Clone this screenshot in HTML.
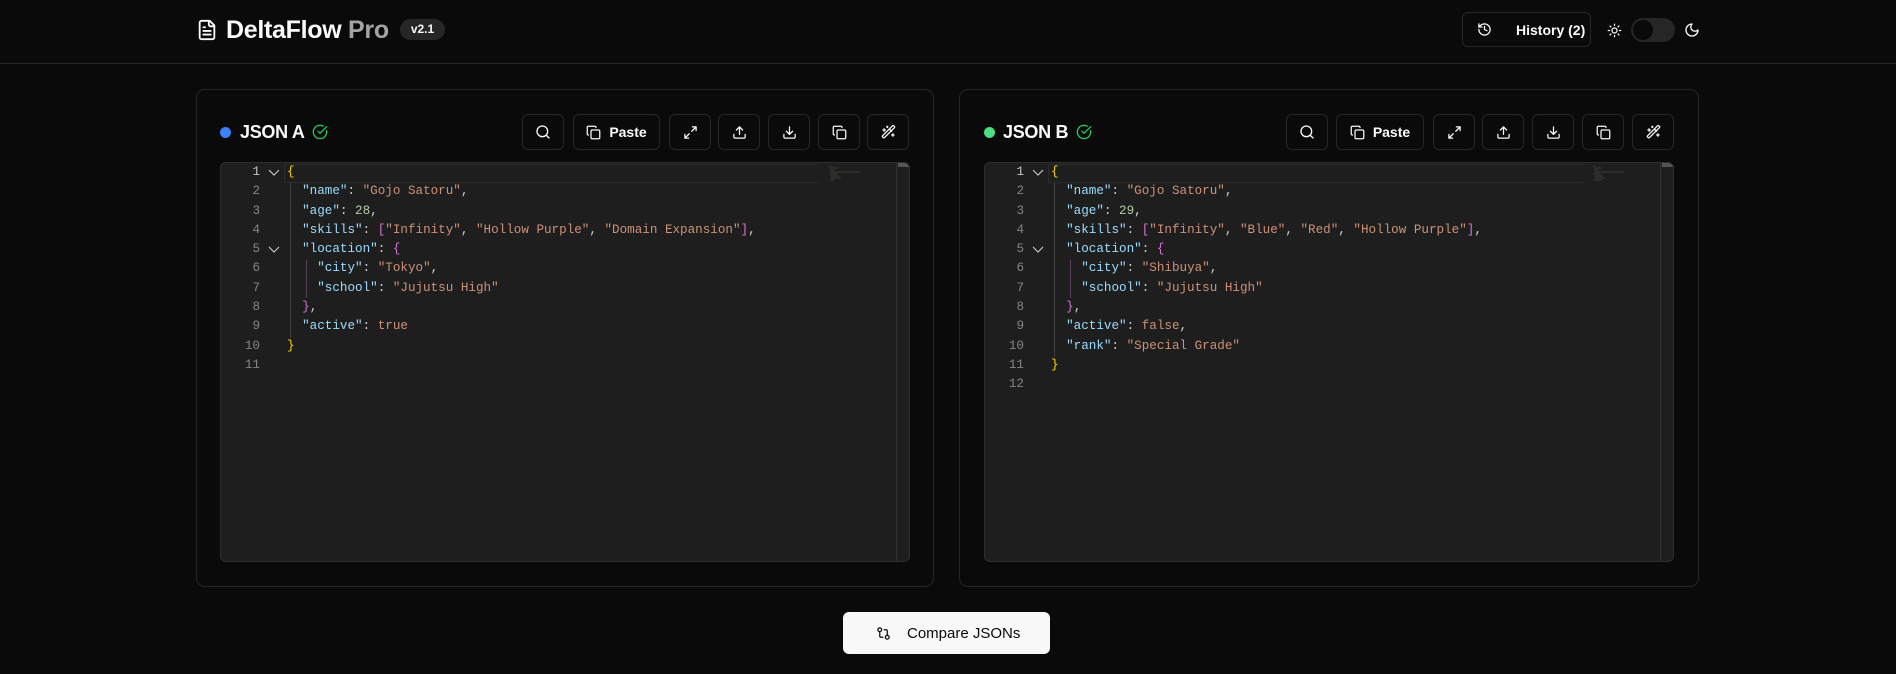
<!DOCTYPE html>
<html><head><meta charset="utf-8"><style>
*{box-sizing:border-box;margin:0;padding:0}
body{width:1896px;height:674px;background:#0a0a0a;font-family:"Liberation Sans",sans-serif;color:#fafafa;position:relative;overflow:hidden}
.hdr{position:absolute;left:0;top:0;width:1896px;height:64px;border-bottom:1px solid #262626}
.abs{position:absolute}
.btn{position:absolute;top:114px;height:36px;border:1px solid #262626;border-radius:6px;background:#0a0a0a;display:flex;align-items:center;justify-content:center;gap:8px;font-weight:bold;font-size:14px}
svg{display:block}
.panel{position:absolute;top:89px;height:498px;border:1px solid #262626;border-radius:9px}
.ed{position:absolute;top:162px;height:400px;background:#1e1e1e;border:1px solid #2e2e2e;border-radius:6px;overflow:hidden;font-family:"Liberation Mono",monospace;font-size:12.6px}
.ln{position:absolute;left:0;width:39px;text-align:right;color:#858585}
.ln div,.code div{height:19.3px;line-height:19.3px;white-space:pre}
.code{position:absolute;left:66px;top:0}
.k{color:#9cdcfe}.s{color:#ce9178}.n{color:#b5cea8}.y{color:#ffd700}.p{color:#da70d6}.w{color:#d4d4d4}
.cur{position:absolute;left:63px;right:0;top:1px;height:19px;border:1px solid #2c2c2c;border-right:none}
.mm{position:absolute;top:2px;width:62px;height:16px;opacity:.6}
.sb{position:absolute;right:0;top:0;width:13px;height:100%;border-left:1px solid #333}
.sb:before{content:"";position:absolute;left:1px;right:0;top:0;height:4px;background:#555}
.guide{position:absolute;width:1px;background:#404040}
</style></head><body>
<div class="hdr"></div>
<svg class="abs" style="left:196px;top:18px" width="22" height="24" viewBox="0 0 24 24" fill="none" stroke="#fafafa" stroke-width="2" stroke-linecap="round" stroke-linejoin="round"><path d="M15 2H6a2 2 0 0 0-2 2v16a2 2 0 0 0 2 2h12a2 2 0 0 0 2-2V7z"/><path d="M14 2v4a2 2 0 0 0 2 2h4M16 13H8M16 17H8M10 9H8"/></svg>
<div class="abs" style="left:226px;top:15px;font-size:25px;font-weight:bold;letter-spacing:-0.3px;line-height:30px">DeltaFlow <span style="color:#a3a3a3">Pro</span></div>
<div class="abs" style="left:400px;top:19px;width:45px;height:21px;border-radius:11px;background:#262626;font-size:12px;font-weight:bold;text-align:center;line-height:21px">v2.1</div>
<div class="abs" style="left:1462px;top:12px;width:129px;height:35px;border:1px solid #262626;border-radius:6px;font-size:14px;font-weight:bold;display:flex;align-items:center;white-space:nowrap"><svg style="margin-left:14px" width="15" height="15" viewBox="0 0 24 24" fill="none" stroke="#fafafa" stroke-width="2" stroke-linecap="round" stroke-linejoin="round"><path d="M3 12a9 9 0 1 0 9-9 9.75 9.75 0 0 0-6.74 2.74L3 8"/><path d="M3 3v5h5M12 7v5l4 2"/></svg><span style="margin-left:24px">History (2)</span></div>
<svg class="abs" style="left:1607px;top:23px" width="15" height="15" viewBox="0 0 24 24" fill="none" stroke="#fafafa" stroke-width="2" stroke-linecap="round"><circle cx="12" cy="12" r="4"/><path d="M12 2v2M12 20v2M4.9 4.9l1.4 1.4M17.7 17.7l1.4 1.4M2 12h2M20 12h2M6.3 17.7l-1.4 1.4M19.1 4.9l-1.4 1.4"/></svg>
<div class="abs" style="left:1631px;top:18px;width:44px;height:24px;border-radius:12px;background:#262626"><div style="position:absolute;left:2px;top:2px;width:20px;height:20px;border-radius:50%;background:#0a0a0a"></div></div>
<svg class="abs" style="left:1684px;top:22px" width="16" height="16" viewBox="0 0 24 24" fill="none" stroke="#fafafa" stroke-width="2" stroke-linecap="round" stroke-linejoin="round"><path d="M12 3a6 6 0 0 0 9 9 9 9 0 1 1-9-9Z"/></svg>

<div class="panel" style="left:196px;width:738px"></div>
<div class="abs" style="left:220px;top:127px;width:11px;height:11px;border-radius:50%;background:#3b82f6"></div>
<div class="abs" style="left:240px;top:120px;font-size:18px;font-weight:bold;line-height:24px;letter-spacing:-0.3px">JSON A</div>
<svg class="abs" style="left:312px;top:124px" width="16" height="16" viewBox="0 0 24 24" fill="none" stroke="#22c55e" stroke-width="2" stroke-linecap="round" stroke-linejoin="round"><path d="M21.8 10A10 10 0 1 1 17 3.3"/><path d="m9 11 3 3L22 4"/></svg>

<div class="panel" style="left:959px;width:740px"></div>
<div class="abs" style="left:984px;top:127px;width:11px;height:11px;border-radius:50%;background:#4ade80"></div>
<div class="abs" style="left:1003px;top:120px;font-size:18px;font-weight:bold;line-height:24px;letter-spacing:-0.3px">JSON B</div>
<svg class="abs" style="left:1076px;top:124px" width="16" height="16" viewBox="0 0 24 24" fill="none" stroke="#22c55e" stroke-width="2" stroke-linecap="round" stroke-linejoin="round"><path d="M21.8 10A10 10 0 1 1 17 3.3"/><path d="m9 11 3 3L22 4"/></svg>

<div class="btn" style="left:522px;width:42px"><svg width="16" height="16" viewBox="0 0 24 24" fill="none" stroke="#fafafa" stroke-width="2" stroke-linecap="round"><circle cx="11" cy="11" r="8"/><path d="m21 21-4.3-4.3"/></svg></div>
<div class="btn" style="left:573px;width:87px"><svg width="15" height="15" viewBox="0 0 24 24" fill="none" stroke="#fafafa" stroke-width="2" stroke-linecap="round" stroke-linejoin="round"><rect x="8" y="8" width="14" height="14" rx="2"/><path d="M4 16c-1.1 0-2-.9-2-2V4c0-1.1.9-2 2-2h10c1.1 0 2 .9 2 2"/></svg>Paste</div>
<div class="btn" style="left:669px;width:42px"><svg width="15" height="15" viewBox="0 0 24 24" fill="none" stroke="#fafafa" stroke-width="2" stroke-linecap="round" stroke-linejoin="round"><path d="M15 3h6v6M9 21H3v-6M21 3l-7 7M3 21l7-7"/></svg></div>
<div class="btn" style="left:718px;width:42px"><svg width="15" height="15" viewBox="0 0 24 24" fill="none" stroke="#fafafa" stroke-width="2" stroke-linecap="round" stroke-linejoin="round"><path d="M21 15v4a2 2 0 0 1-2 2H5a2 2 0 0 1-2-2v-4M17 8l-5-5-5 5M12 3v12"/></svg></div>
<div class="btn" style="left:768px;width:42px"><svg width="15" height="15" viewBox="0 0 24 24" fill="none" stroke="#fafafa" stroke-width="2" stroke-linecap="round" stroke-linejoin="round"><path d="M21 15v4a2 2 0 0 1-2 2H5a2 2 0 0 1-2-2v-4M7 10l5 5 5-5M12 15V3"/></svg></div>
<div class="btn" style="left:818px;width:42px"><svg width="15" height="15" viewBox="0 0 24 24" fill="none" stroke="#fafafa" stroke-width="2" stroke-linecap="round" stroke-linejoin="round"><rect x="8" y="8" width="14" height="14" rx="2"/><path d="M4 16c-1.1 0-2-.9-2-2V4c0-1.1.9-2 2-2h10c1.1 0 2 .9 2 2"/></svg></div>
<div class="btn" style="left:867px;width:42px"><svg width="15" height="15" viewBox="0 0 24 24" fill="none" stroke="#fafafa" stroke-width="2" stroke-linecap="round" stroke-linejoin="round"><path d="m21.6 2.4-1.3-1.3a1.2 1.2 0 0 0-1.7 0L2.4 17.3a1.2 1.2 0 0 0 0 1.7l1.3 1.3a1.2 1.2 0 0 0 1.7 0L21.6 4.1a1.2 1.2 0 0 0 0-1.7M14 7l3 3M5 6v4M19 14v4M10 2v2M7 8H3M21 16h-4M11 3H9"/></svg></div>

<div class="btn" style="left:1286px;width:42px"><svg width="16" height="16" viewBox="0 0 24 24" fill="none" stroke="#fafafa" stroke-width="2" stroke-linecap="round"><circle cx="11" cy="11" r="8"/><path d="m21 21-4.3-4.3"/></svg></div>
<div class="btn" style="left:1336px;width:88px"><svg width="15" height="15" viewBox="0 0 24 24" fill="none" stroke="#fafafa" stroke-width="2" stroke-linecap="round" stroke-linejoin="round"><rect x="8" y="8" width="14" height="14" rx="2"/><path d="M4 16c-1.1 0-2-.9-2-2V4c0-1.1.9-2 2-2h10c1.1 0 2 .9 2 2"/></svg>Paste</div>
<div class="btn" style="left:1433px;width:42px"><svg width="15" height="15" viewBox="0 0 24 24" fill="none" stroke="#fafafa" stroke-width="2" stroke-linecap="round" stroke-linejoin="round"><path d="M15 3h6v6M9 21H3v-6M21 3l-7 7M3 21l7-7"/></svg></div>
<div class="btn" style="left:1482px;width:42px"><svg width="15" height="15" viewBox="0 0 24 24" fill="none" stroke="#fafafa" stroke-width="2" stroke-linecap="round" stroke-linejoin="round"><path d="M21 15v4a2 2 0 0 1-2 2H5a2 2 0 0 1-2-2v-4M17 8l-5-5-5 5M12 3v12"/></svg></div>
<div class="btn" style="left:1532px;width:42px"><svg width="15" height="15" viewBox="0 0 24 24" fill="none" stroke="#fafafa" stroke-width="2" stroke-linecap="round" stroke-linejoin="round"><path d="M21 15v4a2 2 0 0 1-2 2H5a2 2 0 0 1-2-2v-4M7 10l5 5 5-5M12 15V3"/></svg></div>
<div class="btn" style="left:1582px;width:42px"><svg width="15" height="15" viewBox="0 0 24 24" fill="none" stroke="#fafafa" stroke-width="2" stroke-linecap="round" stroke-linejoin="round"><rect x="8" y="8" width="14" height="14" rx="2"/><path d="M4 16c-1.1 0-2-.9-2-2V4c0-1.1.9-2 2-2h10c1.1 0 2 .9 2 2"/></svg></div>
<div class="btn" style="left:1632px;width:42px"><svg width="15" height="15" viewBox="0 0 24 24" fill="none" stroke="#fafafa" stroke-width="2" stroke-linecap="round" stroke-linejoin="round"><path d="m21.6 2.4-1.3-1.3a1.2 1.2 0 0 0-1.7 0L2.4 17.3a1.2 1.2 0 0 0 0 1.7l1.3 1.3a1.2 1.2 0 0 0 1.7 0L21.6 4.1a1.2 1.2 0 0 0 0-1.7M14 7l3 3M5 6v4M19 14v4M10 2v2M7 8H3M21 16h-4M11 3H9"/></svg></div>

<div class="ed" style="left:220px;width:690px">
<div class="cur" style="right:90px"></div>
<div class="guide" style="left:69px;top:20px;height:155px"></div>
<div class="guide" style="left:85px;top:97px;height:38px;background:#5a3d5c"></div>
<div class="ln" style="top:0"><div style="color:#c6c6c6">1</div><div>2</div><div>3</div><div>4</div><div>5</div><div>6</div><div>7</div><div>8</div><div>9</div><div>10</div><div>11</div></div>
<svg class="abs" style="left:47px;top:5px" width="12" height="10" viewBox="0 0 12 10" fill="none" stroke="#c5c5c5" stroke-width="1.2"><path d="M1 2l5 5 5-5"/></svg>
<svg class="abs" style="left:47px;top:82px" width="12" height="10" viewBox="0 0 12 10" fill="none" stroke="#c5c5c5" stroke-width="1.2"><path d="M1 2l5 5 5-5"/></svg>
<div class="code w">
<div><span class="y">{</span></div>
<div>  <span class="k">"name"</span>: <span class="s">"Gojo Satoru"</span>,</div>
<div>  <span class="k">"age"</span>: <span class="n">28</span>,</div>
<div>  <span class="k">"skills"</span>: <span class="p">[</span><span class="s">"Infinity"</span>, <span class="s">"Hollow Purple"</span>, <span class="s">"Domain Expansion"</span><span class="p">]</span>,</div>
<div>  <span class="k">"location"</span>: <span class="p">{</span></div>
<div>    <span class="k">"city"</span>: <span class="s">"Tokyo"</span>,</div>
<div>    <span class="k">"school"</span>: <span class="s">"Jujutsu High"</span></div>
<div>  <span class="p">}</span>,</div>
<div>  <span class="k">"active"</span>: <span class="s">true</span></div>
<div><span class="y">}</span></div>
</div>
<svg class="mm" style="left:607px" viewBox="0 0 62 16"><g stroke-width="0.6"><path d="M1 1h2M2 3h8M2 5h4M2 7h30M2 9h7M3 11h8M3 13h10M2 15h4" stroke="#8a7a6a"/></g></svg>
<div class="sb"></div>
</div>

<div class="ed" style="left:984px;width:690px">
<div class="cur" style="right:90px"></div>
<div class="guide" style="left:69px;top:20px;height:174px"></div>
<div class="guide" style="left:85px;top:97px;height:38px;background:#5a3d5c"></div>
<div class="ln" style="top:0"><div style="color:#c6c6c6">1</div><div>2</div><div>3</div><div>4</div><div>5</div><div>6</div><div>7</div><div>8</div><div>9</div><div>10</div><div>11</div><div>12</div></div>
<svg class="abs" style="left:47px;top:5px" width="12" height="10" viewBox="0 0 12 10" fill="none" stroke="#c5c5c5" stroke-width="1.2"><path d="M1 2l5 5 5-5"/></svg>
<svg class="abs" style="left:47px;top:82px" width="12" height="10" viewBox="0 0 12 10" fill="none" stroke="#c5c5c5" stroke-width="1.2"><path d="M1 2l5 5 5-5"/></svg>
<div class="code w">
<div><span class="y">{</span></div>
<div>  <span class="k">"name"</span>: <span class="s">"Gojo Satoru"</span>,</div>
<div>  <span class="k">"age"</span>: <span class="n">29</span>,</div>
<div>  <span class="k">"skills"</span>: <span class="p">[</span><span class="s">"Infinity"</span>, <span class="s">"Blue"</span>, <span class="s">"Red"</span>, <span class="s">"Hollow Purple"</span><span class="p">]</span>,</div>
<div>  <span class="k">"location"</span>: <span class="p">{</span></div>
<div>    <span class="k">"city"</span>: <span class="s">"Shibuya"</span>,</div>
<div>    <span class="k">"school"</span>: <span class="s">"Jujutsu High"</span></div>
<div>  <span class="p">}</span>,</div>
<div>  <span class="k">"active"</span>: <span class="s">false</span>,</div>
<div>  <span class="k">"rank"</span>: <span class="s">"Special Grade"</span></div>
<div><span class="y">}</span></div>
</div>
<svg class="mm" style="left:607px" viewBox="0 0 62 16"><g stroke-width="0.6"><path d="M1 1h2M2 3h8M2 5h4M2 7h30M2 9h7M3 11h8M3 13h10M2 15h8" stroke="#8a7a6a"/></g></svg>
<div class="sb"></div>
</div>

<div class="abs" style="left:843px;top:612px;width:207px;height:42px;background:#f8f8f8;border-radius:6px;color:#0a0a0a;font-size:15px;display:flex;align-items:center"><svg style="margin-left:33px" width="15" height="15" viewBox="0 0 24 24" fill="none" stroke="#0a0a0a" stroke-width="2" stroke-linecap="round" stroke-linejoin="round"><circle cx="18" cy="18" r="3"/><circle cx="6" cy="6" r="3"/><path d="M13 6h3a2 2 0 0 1 2 2v7M11 18H8a2 2 0 0 1-2-2V9"/></svg><span style="margin-left:16px">Compare JSONs</span></div>
</body></html>
